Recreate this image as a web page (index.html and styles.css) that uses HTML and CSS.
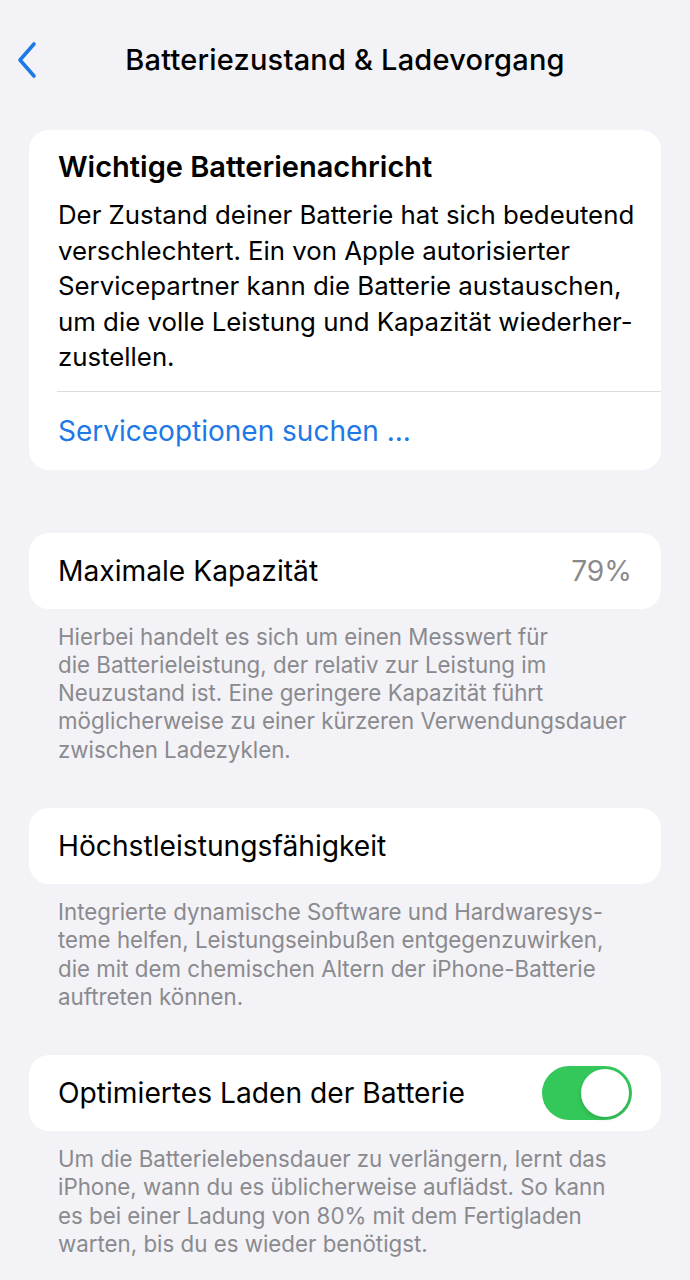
FILE: index.html
```html
<!DOCTYPE html>
<html lang="de">
<head>
    <meta charset="UTF-8">
    <meta name="viewport" content="width=device-width, initial-scale=1.0">
    <title>Batteriezustand &amp; Ladevorgang</title>
    <link rel="stylesheet" href="styles.css">
</head>
<body>

    <div class="nav">
        <a class="back" href="#">
            <svg width="22" height="38" viewBox="0 0 22 38">
                <path d="M18 3 L4 19 L18 35" fill="none" stroke="#1e78e6" stroke-width="3.6" stroke-linecap="round" stroke-linejoin="round"/>
            </svg>
        </a>
        <h1>Batteriezustand &amp; Ladevorgang</h1>
    </div>

    <div class="page">

        <div class="card message">
            <div class="message-body">
                <h2>Wichtige Batterienachricht</h2>
                <p>Der Zustand deiner Batterie hat sich bedeutend<br>verschlechtert. Ein von Apple autorisierter<br>Servicepartner kann die Batterie austauschen,<br>um die volle Leistung und Kapazität wiederher-<br>zustellen.</p>
            </div>
            <a class="link-row" href="#">Serviceoptionen suchen ...</a>
        </div>

        <div class="card row">
            <span>Maximale Kapazität</span>
            <span class="value">79%</span>
        </div>
        <p class="footnote">Hierbei handelt es sich um einen Messwert für<br>die Batterieleistung, der relativ zur Leistung im<br>Neuzustand ist. Eine geringere Kapazität führt<br>möglicherweise zu einer kürzeren Verwendungsdauer<br>zwischen Ladezyklen.</p>

        <div class="card row">
            <span>Höchstleistungsfähigkeit</span>
        </div>
        <p class="footnote">Integrierte dynamische Software und Hardwaresys-<br>teme helfen, Leistungseinbußen entgegenzuwirken,<br>die mit dem chemischen Altern der iPhone-Batterie<br>auftreten können.</p>

        <div class="card row">
            <span>Optimiertes Laden der Batterie</span>
            <span class="switch on"><span class="knob"></span></span>
        </div>
        <p class="footnote">Um die Batterielebensdauer zu verlängern, lernt das<br>iPhone, wann du es üblicherweise auflädst. So kann<br>es bei einer Ladung von 80% mit dem Fertigladen<br>warten, bis du es wieder benötigst.</p>

    </div>

</body>
</html>
```

FILE: styles.css
```css
body {
  margin: 0;
  background-color: #f2f2f7;
  font-family: Inter, "Noto Sans", sans-serif;
  color: #000;
  overflow: hidden;
}

.nav {
  position: relative;
  height: 120px;
  display: flex;
  align-items: flex-start;
  justify-content: center;
}

.nav h1 {
  margin: 0;
  padding-top: 42px;
  font-size: 29px;
  font-weight: 550;
  line-height: 36px;
  letter-spacing: 0.2px;
}

.back {
  position: absolute;
  left: 16px;
  top: 41px;
  display: block;
}

.back svg {
  display: block;
}

.page {
  padding: 10px 29px 0 29px;
}

.card {
  background-color: #fff;
  border-radius: 20px;
}

.message {
  margin-bottom: 63px;
}

.message-body {
  margin-left: 28px;
  padding: 19px 0 16px 1px;
  border-bottom: 1px solid #dcdce0;
}

.message h2 {
  margin: 0 0 13px 0;
  font-size: 29px;
  font-weight: 580;
  line-height: 35px;
}

.message p {
  margin: 0;
  font-size: 25.8px;
  line-height: 35.5px;
  white-space: nowrap;
}

.link-row {
  display: block;
  padding: 0 29px;
  height: 78px;
  line-height: 78px;
  font-size: 28px;
  color: #1e78e6;
  text-decoration: none;
}

.row {
  height: 76px;
  padding: 0 29px;
  display: flex;
  align-items: center;
  justify-content: space-between;
  font-size: 28.2px;
}

.row .value {
  color: #8a8a8e;
}

.footnote {
  margin: 14px 0 44px 0;
  padding-left: 29px;
  font-size: 22.3px;
  line-height: 28.3px;
  color: #8a8a8e;
  white-space: nowrap;
}

.switch {
  position: relative;
  width: 90px;
  height: 54px;
  border-radius: 27px;
  background-color: #34c759;
  flex-shrink: 0;
}

.switch .knob {
  position: absolute;
  right: 3px;
  top: 3px;
  width: 48px;
  height: 48px;
  border-radius: 50%;
  background-color: #fff;
  box-shadow: 0 2px 4px rgba(0, 0, 0, 0.15);
}
```
